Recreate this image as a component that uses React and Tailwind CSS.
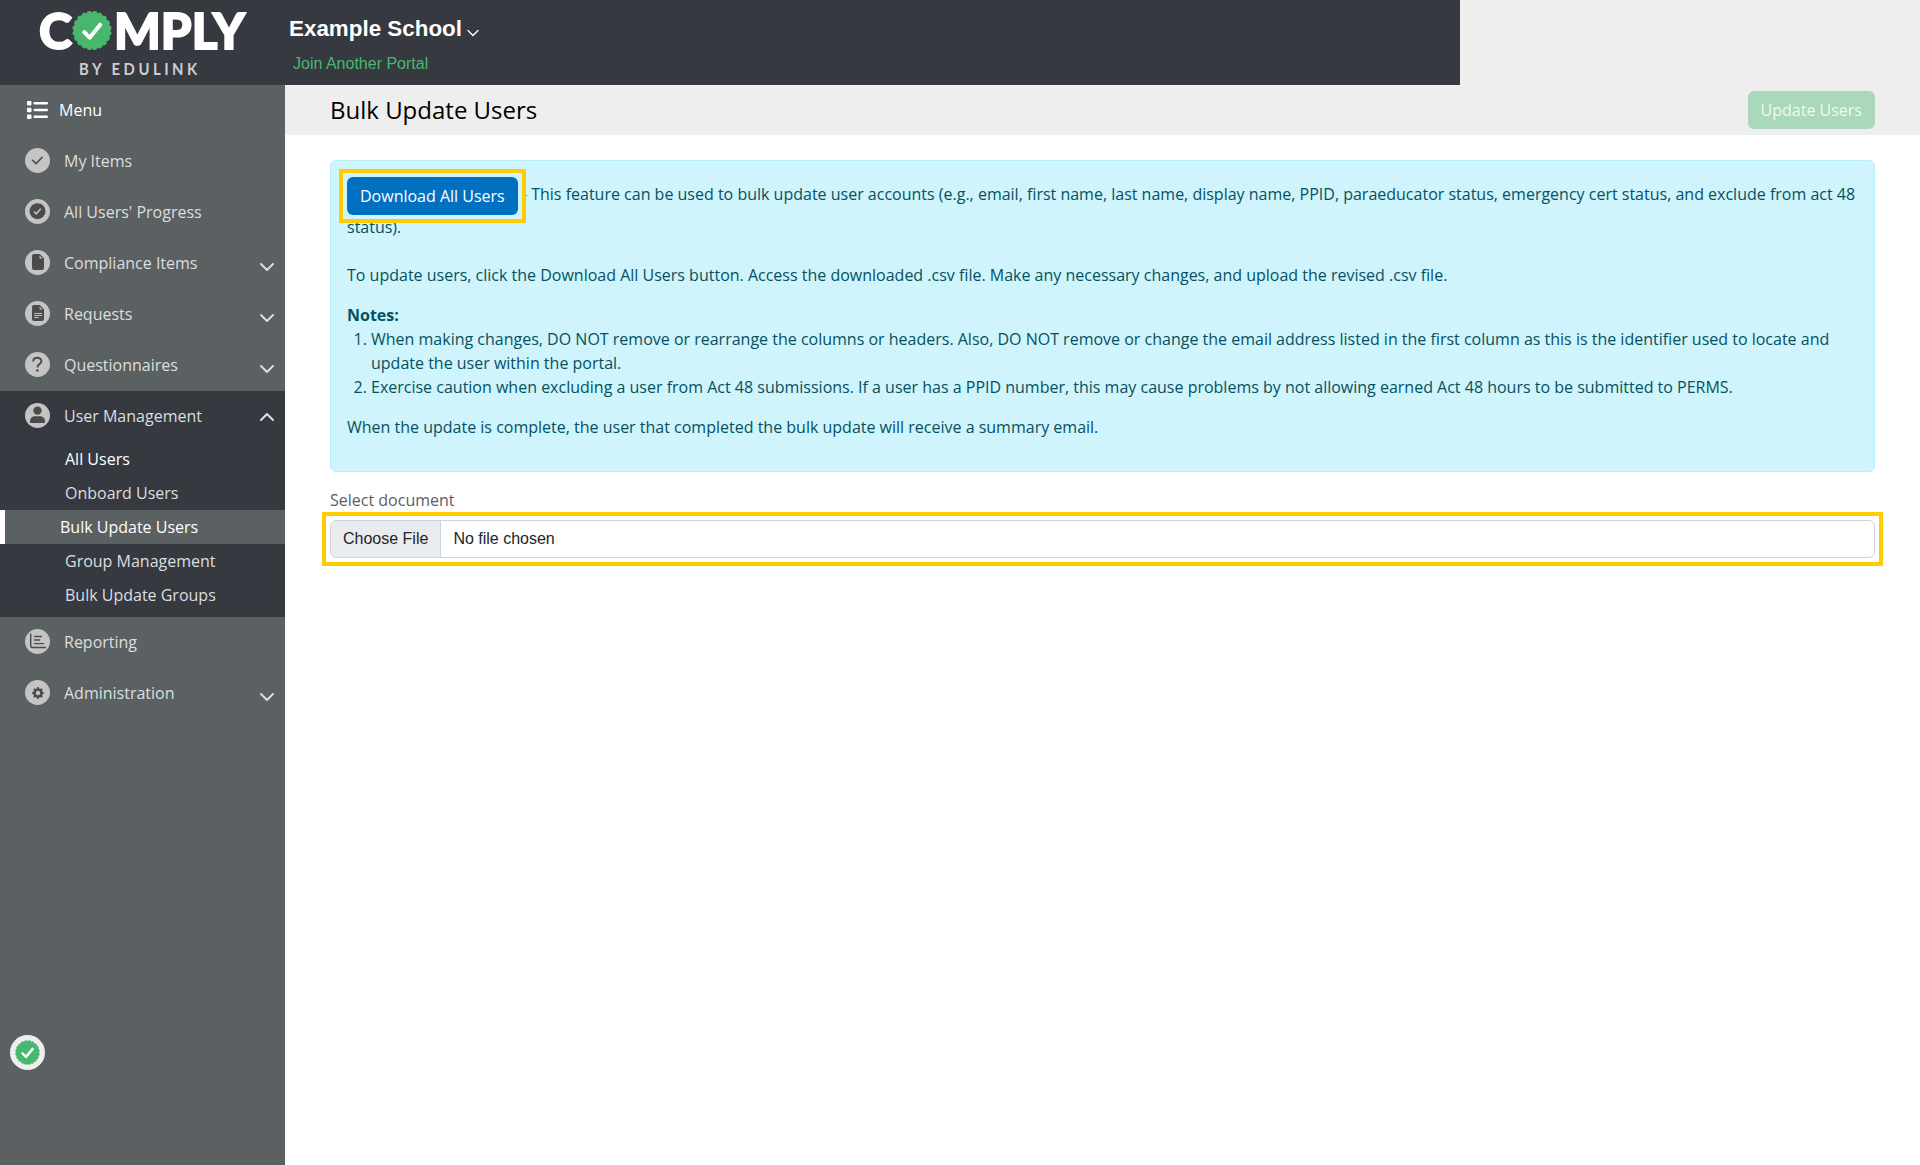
import React from 'react';
import { BsFileEarmarkFill, BsFileEarmarkTextFill, BsGearFill } from 'react-icons/bs';

// Scalloped edge of the green badge
const sealPath = (cx, cy, r, bumps) => {
  let d = '';
  for (let i = 0; i < bumps; i++) {
    const a = (i / bumps) * Math.PI * 2;
    const b = ((i + 1) / bumps) * Math.PI * 2;
    const x = cx + r * Math.cos(a);
    const y = cy + r * Math.sin(a);
    if (i === 0) d += `M${x} ${y}`;
    d += `A3 3 0 0 1 ${cx + r * Math.cos(b)} ${cy + r * Math.sin(b)}`;
  }
  return d + 'Z';
};

const Seal = ({ className }) => (
  <svg viewBox="0 0 40 40" className={className}>
    <path d={sealPath(20, 20, 18, 20)} fill="#48b76e" />
    <path d="M12.3 21.6L17.6 27.2L28.2 14.2" fill="none" stroke="#fff" strokeWidth="4" strokeLinecap="round" strokeLinejoin="round" />
  </svg>
);

const Chevron = ({ up }) => (
  <svg viewBox="0 0 16 10" className="w-4 h-2.5" fill="none" stroke="currentColor" strokeWidth="2" strokeLinecap="round" strokeLinejoin="round">
    <path d={up ? 'M2 8L8 2L14 8' : 'M2 2L8 8L14 2'} />
  </svg>
);

const CheckIcon = () => (
  <svg viewBox="0 0 25 25" className="w-full h-full" fill="none" stroke="#4b4b4b" strokeWidth="1.5" strokeLinecap="round">
    <path d="M7.500 12.200L11 15.600L17.200 9.300" />
  </svg>
);

const ProgressIcon = () => (
  <svg viewBox="0 0 25 25" className="w-full h-full">
    <circle cx="12.5" cy="12.2" r="8" fill="#4b4b4b" />
    <path d="M9 12.6L11.3 14.8L15.8 9.8" fill="none" stroke="#c4c4c4" strokeWidth="1.5" />
  </svg>
);

const QuestionIcon = () => (
  <svg viewBox="0 0 25 25" className="w-full h-full">
    <path d="M8.200 9.400C8.200 4.600 16.400 4.600 16.400 9.200C16.400 12 12.300 12 12.300 15.600" fill="none" stroke="#4b4b4b" strokeWidth="1.900" />
    <circle cx="12.300" cy="18.500" r="1.300" fill="#4b4b4b" />
  </svg>
);

const PersonIcon = () => (
  <svg viewBox="0 0 25 25" className="w-full h-full" fill="#4b4b4b">
    <circle cx="12.5" cy="7.6" r="4.2" />
    <path d="M5 18.2C5 15 7.5 13.3 10 13.3H15C17.500 13.3 20 15 20 18.200V19.300Q20 20 19.300 20H5.700Q5 20 5 19.300Z" />
  </svg>
);

const ReportIcon = () => (
  <svg viewBox="0 0 25 25" className="w-full h-full" fill="none" stroke="#4b4b4b" strokeWidth="1.4" strokeLinecap="round">
    <path d="M5.700 5V16.500Q5.700 18.500 7.700 18.500H20.500M9.600 7.500H16.400M9.600 11H14.600M9.600 14.600H18.600" />
  </svg>
);

const subItems = ['All Users', 'Onboard Users', 'Bulk Update Users', 'Group Management', 'Bulk Update Groups'];

const menu = [
  { label: 'My Items', icon: <CheckIcon /> },
  { label: "All Users' Progress", icon: <ProgressIcon /> },
  { label: 'Compliance Items', icon: <BsFileEarmarkFill size={16} className="mb-px" />, chevron: true },
  { label: 'Requests', icon: <BsFileEarmarkTextFill size={16} className="mb-px" />, chevron: true },
  { label: 'Questionnaires', icon: <QuestionIcon />, chevron: true },
  { label: 'User Management', icon: <PersonIcon />, chevron: true, open: true },
  { label: 'Reporting', icon: <ReportIcon /> },
  { label: 'Administration', icon: <BsGearFill size={12} />, chevron: true },
];

const MenuItem = ({ item }) => (
  <li className={item.open ? 'bg-[#363940] pb-[5px]' : ''}>
    <a className="flex h-[51px] items-start pl-[25px] pr-[10px] pt-3">
      <span className="flex w-[25px] h-[25px] shrink-0 items-center justify-center rounded-full bg-[#c4c4c4] text-[#4b4b4b]">{item.icon}</span>
      <span className="ml-[14px] mt-px flex-1 leading-6">{item.label}</span>
      {item.chevron && <span className={item.open ? 'mt-[9px]' : 'mt-[12px]'}><Chevron up={item.open} /></span>}
    </a>
    {item.open && (
      <ul>
        {subItems.map((s) => (
          <li
            key={s}
            className={
              s === 'Bulk Update Users'
                ? 'h-[34px] border-l-5 border-white bg-[#5b6062] pl-[55px] leading-[34px] text-white'
                : s === 'All Users'
                ? 'h-[34px] pl-[65px] leading-[34px] text-white'
                : 'h-[34px] pl-[65px] leading-[34px]'
            }
          >
            {s}
          </li>
        ))}
      </ul>
    )}
  </li>
);

const Header = () => (
  <header className="flex h-[85px] w-[1460px] bg-[#363940]">
    <div className="w-[285px] shrink-0">
      <svg viewBox="0 0 285 85" className="w-[285px] h-[85px]" fontFamily="Lato, sans-serif">
        <g fontSize="50" fontWeight="900" fill="#fff" stroke="#fff" strokeWidth="1.800">
          <text x="39" y="49" textLength="33" lengthAdjust="spacingAndGlyphs">C</text>
          <text x="114" y="49" textLength="131" lengthAdjust="spacingAndGlyphs">MPLY</text>
        </g>
        <text x="93" y="75.500" fontSize="17.500" fontWeight="700" fill="#cdced1" textLength="139" lengthAdjust="spacing" transform="scale(0.85 1)">BY EDULINK</text>
        <svg x="72" y="10.500" width="40" height="40"><Seal /></svg>
      </svg>
    </div>
    <div className="pt-[15px] pl-1 font-['Liberation_Sans',Arial,sans-serif]">
      <div className="flex items-center text-white">
        <h1 className="text-[22.4px] leading-7 font-bold">Example School</h1>
        <svg viewBox="0 0 12 8" className="ml-[5px] mt-2 w-3 h-2" fill="none" stroke="currentColor" strokeWidth="1.400" strokeLinecap="round">
          <path d="M1 1.500L6 6.500L11 1.500" />
        </svg>
      </div>
      <a className="mt-[9px] ml-1 block text-base leading-6 text-[#48b76e]">Join Another Portal</a>
    </div>
  </header>
);

const Sidebar = () => (
  <nav className="w-[285px] shrink-0 bg-[#5b6062] text-[#dcdedf]">
    <div className="mb-px flex h-[50px] items-center pl-[27px] text-white">
      <svg viewBox="0 0 21 18" className="w-[21px] h-[18px]" fill="currentColor">
        <rect x="0" y="0" width="4.500" height="4.500" rx="1" />
        <rect x="0" y="6.700" width="4.500" height="4.500" rx="1" />
        <rect x="0" y="13.400" width="4.500" height="4.500" rx="1" />
        <rect x="6.500" y="1.100" width="14.500" height="2.400" rx="1.200" />
        <rect x="6.500" y="7.800" width="14.500" height="2.400" rx="1.200" />
        <rect x="6.500" y="14.500" width="14.500" height="2.400" rx="1.200" />
      </svg>
      <span className="ml-[11px]">Menu</span>
    </div>
    <ul>
      {menu.map((item) => <MenuItem key={item.label} item={item} />)}
    </ul>
  </nav>
);

// Yellow frame drawn around the control it sits in
const Highlight = ({ className = '-inset-2' }) => (
  <span className={`pointer-events-none absolute border-4 border-[#ffcc00] ${className}`} />
);

const App = () => {
  return (
    <div className="relative flex h-[1165px] w-[1920px] flex-col overflow-hidden bg-[#eee] font-['Open_Sans',sans-serif] text-base">
      <Header />
      <div className="flex flex-1">
        <Sidebar />
        <main className="flex-1 bg-white">
          <div className="flex h-[50px] items-center justify-between bg-[#eee] pr-[45px] pl-[45px]">
            <h2 className="text-2xl text-black">Bulk Update Users</h2>
            <button className="h-[38px] rounded-md bg-[#a9d8ba] px-[13px] text-[#f1f8f3]">Update Users</button>
          </div>

          <div className="px-[45px] pt-[25px]">
            <div className="h-[312px] rounded-md border border-[#b6effb] bg-[#cff4fc] p-4 leading-6 text-[#055160]">
              <div>
                <button className="relative inline-block h-[38px] rounded-md bg-[#0070c0] px-[13px] align-middle text-white">
                  Download All Users
                  <Highlight />
                </button>{' '}
                {' - This feature can be used to bulk update user accounts (e.g., email, first name, last name, display name, PPID, paraeducator status, emergency cert status, and exclude from act 48 status).'}
              </div>
              <p className="mt-6">To update users, click the Download All Users button. Access the downloaded .csv file. Make any necessary changes, and upload the revised .csv file.</p>
              <p className="mt-4 font-bold">Notes:</p>
              <ol className="list-decimal pl-6">
                <li>When making changes, DO NOT remove or rearrange the columns or headers. Also, DO NOT remove or change the email address listed in the first column as this is the identifier used to locate and update the user within the portal.</li>
                <li>Exercise caution when excluding a user from Act 48 submissions. If a user has a PPID number, this may cause problems by not allowing earned Act 48 hours to be submitted to PERMS.</li>
              </ol>
              <p className="mt-4">When the update is complete, the user that completed the bulk update will receive a summary email.</p>
            </div>

            <label className="mt-4 block leading-6 text-[#5b6062]">Select document</label>
            <div className="relative mt-2 flex h-[38px] rounded-md border border-[#ced4da] bg-white font-['Liberation_Sans',Arial,sans-serif] leading-9 text-[#212529]">
              <span className="rounded-l-[5px] border-r border-[#ced4da] bg-[#e9ecef] px-3">Choose File</span>
              <span className="pl-3">No file chosen</span>
              <Highlight className="-inset-[9px]" />
            </div>
          </div>
        </main>
      </div>

      {/* Floating badge over the sidebar */}
      <div className="absolute top-[1035px] left-[10px] flex h-[35px] w-[35px] items-center justify-center rounded-full bg-[#eee]">
        <Seal className="w-[25px] h-[25px]" />
      </div>
    </div>
  );
};

export default App;
